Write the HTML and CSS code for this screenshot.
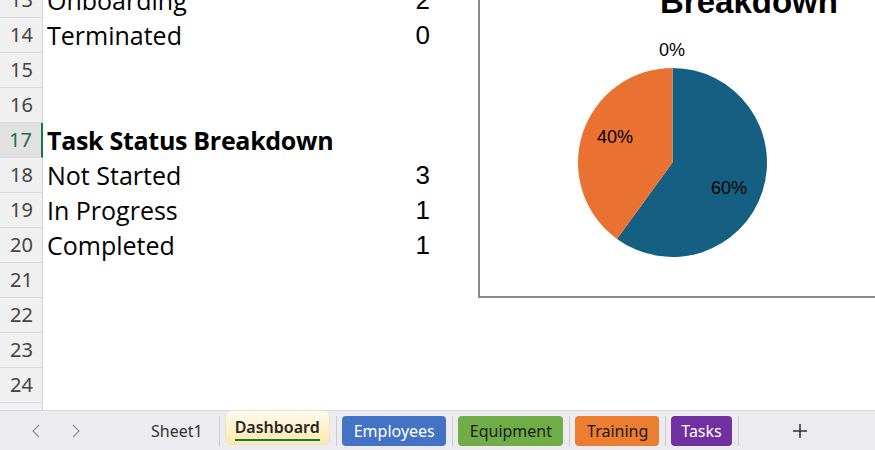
FILE: index.html
```html
<!DOCTYPE html>
<html lang="en">
<head>
<meta charset="utf-8">
<title>Dashboard</title>
<link rel="stylesheet" href="styles.css">
</head>
<body>
<div class="workbook">
  <div class="sheet">
    <div class="rows">
      <div class="row"><div class="rh">13</div><div class="cell label">Onboarding</div><div class="cell num">2</div></div>
      <div class="row"><div class="rh">14</div><div class="cell label">Terminated</div><div class="cell num">0</div></div>
      <div class="row"><div class="rh">15</div><div class="cell label"></div><div class="cell num"></div></div>
      <div class="row"><div class="rh">16</div><div class="cell label"></div><div class="cell num"></div></div>
      <div class="row sel"><div class="rh">17</div><div class="cell label heading">Task Status Breakdown</div><div class="cell num"></div></div>
      <div class="row"><div class="rh">18</div><div class="cell label">Not Started</div><div class="cell num">3</div></div>
      <div class="row"><div class="rh">19</div><div class="cell label">In Progress</div><div class="cell num">1</div></div>
      <div class="row"><div class="rh">20</div><div class="cell label">Completed</div><div class="cell num">1</div></div>
      <div class="row"><div class="rh">21</div><div class="cell label"></div><div class="cell num"></div></div>
      <div class="row"><div class="rh">22</div><div class="cell label"></div><div class="cell num"></div></div>
      <div class="row"><div class="rh">23</div><div class="cell label"></div><div class="cell num"></div></div>
      <div class="row"><div class="rh">24</div><div class="cell label"></div><div class="cell num"></div></div>
      <div class="row"><div class="rh">25</div><div class="cell label"></div><div class="cell num"></div></div>
    </div>

    <!-- floating pie chart object -->
    <div class="chart">
      <svg class="chart-svg" width="416" height="393" viewBox="480 -98 416 393" xmlns="http://www.w3.org/2000/svg">
        <text class="chart-title" x="660" y="-27">Task Status</text>
        <text class="chart-title" x="660" y="13">Breakdown</text>
        <path class="slice-blue" d="M672.5 162.5 L672.5 68 A94.5 94.5 0 1 1 616.95 238.95 Z"/>
        <path class="slice-orange" d="M672.5 162.5 L616.95 238.95 A94.5 94.5 0 0 1 672.5 68 Z"/>
        <text class="data-label" x="659" y="55.5">0%</text>
        <text class="data-label" x="597" y="143">40%</text>
        <text class="data-label" x="711" y="194">60%</text>
      </svg>
    </div>
  </div>

  <div class="tabbar">
    <div class="nav">
      <span class="nav-btn">
        <svg width="8" height="14" viewBox="0 0 8 14"><polyline points="7,1 1,7 7,13" fill="none" stroke="#8f8f94" stroke-width="1.2"/></svg>
      </span>
      <span class="nav-btn">
        <svg width="8" height="14" viewBox="0 0 8 14"><polyline points="1,1 7,7 1,13" fill="none" stroke="#8f8f94" stroke-width="1.2"/></svg>
      </span>
    </div>
    <div class="tab plain">Sheet1</div>
    <span class="sep"></span>
    <div class="tab active"><span class="tab-label">Dashboard</span></div>
    <span class="sep"></span>
    <div class="tab colored blue">Employees</div>
    <span class="sep"></span>
    <div class="tab colored green">Equipment</div>
    <span class="sep"></span>
    <div class="tab colored orange">Training</div>
    <span class="sep"></span>
    <div class="tab colored purple tight">Tasks</div>
    <span class="sep"></span>
    <div class="add">
      <svg width="16" height="16" viewBox="0 0 16 16"><path d="M8 1 V15 M1 8 H15" stroke="#333" stroke-width="1.5" fill="none"/></svg>
    </div>
  </div>
</div>
</body>
</html>
```

FILE: styles.css
```css
html, body {
  margin: 0;
  padding: 0;
  width: 875px;
  height: 450px;
  overflow: hidden;
  background: #fff;
}

.workbook {
  display: flex;
  flex-direction: column;
  height: 450px;
}

/* worksheet grid */
.sheet {
  position: relative;
  height: 410px;
  overflow: hidden;
  background: #fff;
}

.rows {
  margin-top: -17px;
}

.row {
  display: grid;
  grid-template-columns: 43px 300px 87px;
  height: 35px;
}

.rh {
  box-sizing: border-box;
  height: 35px;
  background: #f0f0f0;
  border-right: 1px solid #d2d2d2;
  border-bottom: 1px solid #dadada;
  color: #444;
  font-family: "Noto Sans", sans-serif;
  font-size: 20px;
  line-height: 34px;
  text-align: center;
  padding-left: 1px;
}

.row.sel .rh {
  background: #e1e1e1;
  color: #1d7044;
  border-right: 2px solid #107c41;
  padding-left: 0;
}

.cell {
  height: 35px;
  line-height: 35px;
  white-space: nowrap;
  color: #000;
}

.label {
  padding-left: 4px;
  font-family: "Open Sans", sans-serif;
  font-size: 25px;
}

.label.heading {
  font-weight: 700;
  letter-spacing: -0.3px;
}

.num {
  text-align: right;
  font-family: "Liberation Sans", Arial, sans-serif;
  font-size: 26px;
}

/* chart object */
.chart {
  position: absolute;
  left: 478px;
  top: -99px;
  width: 420px;
  height: 397px;
  box-sizing: border-box;
  border: 2px solid #8a8a8a;
  background: #fff;
}

.chart-svg {
  display: block;
  margin-top: -1px;
}

.chart-title {
  font-family: "Liberation Sans", Arial, sans-serif;
  font-weight: 700;
  font-size: 33px;
  fill: #000;
}

.slice-blue {
  fill: #156082;
}

.slice-orange {
  fill: #e97132;
}

.data-label {
  font-family: "Liberation Sans", Arial, sans-serif;
  font-size: 18px;
  fill: #000;
}

/* sheet tab strip */
.tabbar {
  height: 40px;
  box-sizing: border-box;
  border-top: 1px solid #d7d7dd;
  background: #ebebf0;
  display: flex;
  align-items: center;
  padding-left: 16px;
  font-family: "Noto Sans", sans-serif;
  font-size: 16px;
  color: #2b2b2b;
}

.nav {
  display: flex;
  margin-right: 39px;
}

.nav-btn {
  width: 40px;
  height: 30px;
  display: flex;
  align-items: center;
  justify-content: center;
}

.tab {
  height: 30px;
  line-height: 30px;
  box-sizing: border-box;
  white-space: nowrap;
}

.tab.plain {
  padding: 0 10px 0 16px;
  color: #333;
}

.tab.active {
  align-self: flex-start;
  margin-top: -1px;
  height: 35px;
  padding: 5px 9px 0;
  border: 1px solid #ece3c6;
  border-radius: 6px;
  background: linear-gradient(#fffbf0, #fde8a9);
  line-height: 22px;
  font-weight: 600;
  color: #262626;
}

.tab-label {
  display: inline-block;
  padding-bottom: 1px;
  border-bottom: 2px solid #107c41;
}

.tab.colored {
  padding: 0 11px 0 12px;
  border-radius: 4px;
}

.tab.colored.tight {
  padding: 0 10px;
}

.blue   { background: #4472c4; color: #fff; }
.green  { background: #70ad47; color: #1a1a1a; }
.orange { background: #ed7d31; color: #1a1a1a; }
.purple { background: #7030a0; color: #fff; }

.sep {
  width: 1px;
  height: 30px;
  background: #cbcbd0;
  margin: 0 5px 0 6px;
}

.add {
  margin-left: 46px;
  width: 20px;
  height: 30px;
  display: flex;
  align-items: center;
  justify-content: center;
}
```
